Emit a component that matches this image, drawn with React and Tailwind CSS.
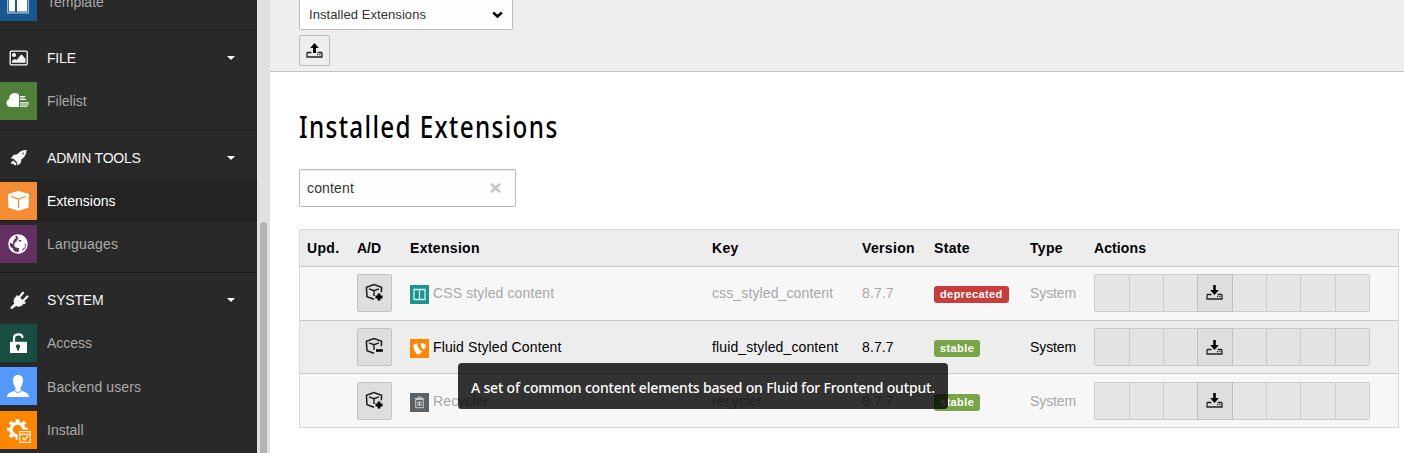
import React from "react";

const TemplateIcon = () => (
  <svg width="37" height="38" viewBox="0 0 37 38" className="block">
    <rect x="7.7" y="6.7" width="20.6" height="23.2" fill="none" stroke="#a9c1d8" strokeWidth="1.2" />
    <path d="M9 8h6v20.500H9zM17 8h10v20.500H17z" fill="#fff" />
  </svg>
);

const FilelistIcon = () => (
  <svg width="37" height="38" viewBox="0 0 37 38" className="block">
    <path d="M19 25h-8C5.500 25 5.200 18 9.300 17 8.800 13.500 11.500 11 14.800 11c2 0 3.400.7 4.200 2z" fill="#fff" />
    <path d="M20 14.600h5.300M20 17.400h6M20 20.900h9M20 24.200h7.500" stroke="#fff" strokeWidth="1.300" />
    <path d="M20 16h4M20 22.500h9" stroke="#a9c199" strokeWidth="1.500" />
  </svg>
);

const BoxIcon = () => (
  <svg width="37" height="38" viewBox="0 0 37 38" className="block">
    <path d="M18.500 9 29 12l-.5 13.700L18.500 28.800 8.500 25.700 8 12z" fill="#fff" />
    <path d="M11.200 14.500l7.300 2.500 7.300-2.500M18.500 17v9" fill="none" stroke="#f28d33" strokeWidth="1.300" />
  </svg>
);

const GlobeIcon = () => (
  <svg width="37" height="38" viewBox="0 0 37 38" className="block">
    <circle cx="18" cy="19" r="9" fill="none" stroke="#fff" strokeWidth="1.500" />
    <path d="M9.300 17c.5-3 2.300-5.500 5-7l1.700.3-1 1.700 1.500.6-2.400 2.200-1.200 2.400.3 2-1.600-.6zM17 10h5l4 4 1 5-1.500.5-1.300-1.500 1.300 3.500-2.700 2.500-1 3-2 1.700-1.200-1.200.4-4.500-3.500-.6-1.500-2.400 1.300-3 2.700-1 3 .7.5-1.700-2.500.3-1.700 1-.8-1.300 2.300-1-.8-1z" fill="#fff" />
    <path d="M10 21.500l2.700 1.800 1.300 3-1 .7-2.300-2.300z" fill="#fff" />
  </svg>
);

const UnlockIcon = () => (
  <svg width="37" height="38" viewBox="0 0 37 38" className="block">
    <path d="M10 17.800h17V29H10z" fill="#fff" />
    <path d="M14 18.500v-4.200c0-5 8.200-5.200 8.600-.4" fill="none" stroke="#fff" strokeWidth="2.200" />
    <path d="M18 20.200a2.200 2.200 0 0 1 1.100 4.100v2.200h-2.200v-2.200A2.200 2.200 0 0 1 18 20.200z" fill="#194e42" />
  </svg>
);

const UserIcon = () => (
  <svg width="37" height="38" viewBox="0 0 37 38" className="block">
    <path d="M18 8c3.300 0 5 2.100 5 5.200 0 3.500-1.600 6.300-2.500 7.300v2.300c.4.900 1.700 1.400 4 2.100 2.800.9 4.200 2 4.500 5.100H7c.3-3.100 1.700-4.200 4.500-5.100 2.300-.7 3.600-1.200 4-2.100v-2.300c-.9-1-2.500-3.800-2.500-7.300C13 10.100 14.700 8 18 8z" fill="#fff" />
    <path d="M14.300 23.400c1.500 2.600 6 2.600 7.400 0" fill="none" stroke="#5599ff" strokeWidth="1" />
  </svg>
);

const InstallIcon = () => (
  <svg width="37" height="38" viewBox="0 0 37 38" className="block">
    <circle cx="17.500" cy="18.500" r="6.300" fill="none" stroke="#fff" strokeWidth="3.200" />
    <g stroke="#fff" strokeWidth="3.600">
      <path d="M17.500 8v4M7 18.500h4M10 11l3 3M25 11l-3 3M10 26l3-3M17.500 29v-4M28 18.500h-4" />
    </g>
    <path d="M17.500 18.500H32V33H17.500z" fill="#ff8700" />
    <path d="M19.700 20.700h10.600v10.600H19.700zM19.700 23.500h10.600" fill="none" stroke="#ffe7c9" strokeWidth="1.300" />
    <path d="M22.500 26.800l2 2 3.500-3.500" fill="none" stroke="#fff" strokeWidth="1.500" />
  </svg>
);

const ImageIcon = () => (
  <svg width="20" height="18" viewBox="0 0 20 18">
    <rect x="1.200" y="2.200" width="17" height="13.600" rx="1" fill="none" stroke="#fff" strokeWidth="1.300" />
    <circle cx="5" cy="6" r="2" fill="#fff" />
    <path d="M3 13.800v-2l2.700-1.800 2 1L12 5.500l1.500.8L16.500 10v3.800z" fill="#f0f0f0" />
  </svg>
);

const RocketIcon = () => (
  <svg width="20" height="18" viewBox="0 0 20 18">
    <path d="M17.600 1C13.500 1 10.300 2.600 8.300 5.200L4.500 6 1.700 9.500l2.900.2 1 1L8 13.500l.6 2.900L11.700 14l.9-3.700c3.400-2.400 4.800-5.200 5-9.300z" fill="#f5f5f5" />
    <circle cx="14.300" cy="4.500" r="1" fill="#777" />
    <path d="M1.800 13.400l2.600-1.900 2.800 2.800.3 1.500-1.500.7-1.700-1.600-1.700.2z" fill="#f5f5f5" />
  </svg>
);

const PlugIcon = () => (
  <svg width="20" height="20" viewBox="0 0 20 20">
    <path d="M10.500 7 14 2.800M14 11l4.400-4.500" stroke="#f5f5f5" strokeWidth="2.300" strokeLinecap="round" />
    <path d="M7.800 4.700l9.200 8-1.300 1.300-1-.3c-2.300 3-5.200 3.600-7.600 2.300L3 19l-1.500-.2L1.800 17l3.400-3.500c-1.300-2.600-.5-5.100 2.300-7.500z" fill="#f5f5f5" />
  </svg>
);

const DriveIcon = ({ up }) => (
  <svg width="17" height="15" viewBox="0 0 17 15" className="block">
    {up ? <path d="M8.500 0 12.800 5H10V10H7V5H4.200z" fill="#000" /> : <path d="M7.200 0h2.600v5h3L8.500 10 4.200 5h3z" fill="#000" />}
    <path d="M5.500 9.500H1.500l-.5.5v4h15v-4l-.5-.5H11.500" fill="none" stroke="#222" strokeWidth="1.300" />
    <path d="M11 11.600h1.200M13.200 11.600h1.300" stroke="#222" strokeWidth="1.200" />
  </svg>
);

const PackageIcon = ({ plus }) => (
  <svg width="18" height="18" viewBox="0 0 18 18" className="block">
    <path d="M9 16.200 2 13.700 1.400 4.300 9 1.600l7.600 2.700-.3 5" fill="none" stroke="#1c1c1c" strokeWidth="1.500" />
    <path d="M4 5.800 9 7.700l5-1.900M9 7.700V13" fill="none" stroke="#1c1c1c" strokeWidth="1.400" />
    {plus ? <path d="M14 10.500v7M10.500 14h7" stroke="#000" strokeWidth="2.800" /> : <path d="M11 13.500H17.800" stroke="#000" strokeWidth="2.600" />}
  </svg>
);

const ColumnsIcon = () => (
  <svg width="19" height="19" viewBox="0 0 19 19" className="block shrink-0">
    <path d="M0 0h19v19H0z" fill="#1a9391" />
    <path d="M4 4.500h11v10H4zM9.500 4.500v10" fill="none" stroke="#d8eeee" strokeWidth="1.300" />
  </svg>
);

const Typo3Icon = () => (
  <svg width="19" height="19" viewBox="0 0 19 19" className="block shrink-0">
    <path d="M0 0h19v19H0z" fill="#ff8700" />
    <path d="M12.400 11.800c-.2.100-.5.100-.7.100-2 0-4.400-5.100-4.400-6.400 0-.5.100-.7.300-.9-2 .2-3.600.8-4 1.500-.2.300-.2.600-.2 1 0 2.900 2.700 8.500 4.900 8.500 1.400 0 3-1.700 4.100-3.800z" fill="#fff" />
    <path d="M11.600 4.300c2.300 0 4.100.4 4.100 1.800 0 2.600-1.200 4.400-2.200 4.400-1.200 0-2.800-3-2.800-5 0-.9.300-1.200.9-1.200z" fill="#fff" />
  </svg>
);

const TrashIcon = () => (
  <svg width="19" height="19" viewBox="0 0 19 19" className="block shrink-0">
    <path d="M0 0h19v19H0z" fill="#5b6164" />
    <path d="M5.700 6.500h7.600v8.200H5.700zM4.800 5.500h9.400M7.800 5.200V4h3.400v1.200M8 8.300v4.700M9.500 8.300v4.700M11 8.300v4.700" fill="none" stroke="#c9cccd" strokeWidth="1" />
  </svg>
);

function ModuleItem({ icon, label, tone, height = "h-[43px]", tracking = "tracking-[0.15px]", active = false }) {
  return (
    <div className={`flex items-center ${height} ${active ? "bg-[#232323] text-white" : "text-[#a9a9a9]"}`}>
      <div className={`h-[38px] w-[37px] shrink-0 ${tone}`}>{icon}</div>
      <span className={`pl-[10px] ${tracking}`}>{label}</span>
    </div>
  );
}

function ModuleGroup({ icon, label, height = "h-[48px]", children }) {
  return (
    <div className="border-t border-[#1e1e1e] pb-[7px]">
      <div className={`flex items-center text-[#f5f5f5] ${height}`}>
        <div className="flex w-[37px] shrink-0 justify-center pt-[6px]">{icon}</div>
        <span className="grow pl-[10px] pt-[6px] tracking-[-0.2px]">{label}</span>
        <svg width="8" height="4" viewBox="0 0 8 4" className="mr-[22px] mt-[6px]">
          <path d="M0 0h8L4 4z" fill="#fff" />
        </svg>
      </div>
      {children}
    </div>
  );
}

const columns = "grid grid-cols-[50px_53px_302px_150px_72px_96px_64px_1fr] items-center pl-[7px]";

const slots = ["w-[35px]", "w-[34px]", "w-[34px]", "w-[36px]", "w-[34px]", "w-[34px]", "w-[35px]", "w-[34px]"];

function Row({ icon, name, id, state, stateTone, installed, height, tone }) {
  const dim = installed ? "text-black" : "text-[#a8a8a8]";
  const line = installed ? "border-[#cbcbcb]" : "border-[#cdcdcd]";
  const fill = installed ? "bg-[#e3e3e3]" : "bg-[#e6e6e6]";
  return (
    <div className={`${columns} ${height} ${tone} ${dim} tracking-[0.12px]`}>
      <span />
      <div className="flex h-[38px] w-[35px] items-center justify-center rounded-[2px] border border-[#c3c3c3] bg-[#dedede] pb-[2px] pr-[1px]">
        <PackageIcon plus={!installed} />
      </div>
      <div className="flex items-center gap-[4px]">
        <div className="pt-[3px]">{icon}</div>
        <span>{name}</span>
      </div>
      <span>{id}</span>
      <span>8.7.7</span>
      <div className="flex pt-[3px]">
        <span className={`rounded-[3px] pl-[6px] pr-[6px] text-[11px] font-bold leading-[17px] tracking-[0.4px] text-white ${stateTone}`}>{state}</span>
      </div>
      <span className="tracking-[-0.1px]">System</span>
      <div className="flex">
        {slots.map((w, i) => (
          <div
            key={i}
            className={`flex h-[38px] items-center justify-center border-y ${w} ${i === 3 ? "border-x border-[#c1c1c1] bg-[#dedede] pr-[2px]" : `${line} ${fill}`} ${i < 3 ? "border-l" : ""} ${i > 3 ? "border-r" : ""} ${i === 0 ? "rounded-l-[2px]" : ""} ${i === 7 ? "rounded-r-[2px]" : ""}`}
          >
            {i === 3 && <DriveIcon />}
          </div>
        ))}
      </div>
    </div>
  );
}

export default function App() {
  return (
    <div className="relative flex h-[453px] w-[1404px] overflow-hidden bg-white font-['Liberation_Sans',sans-serif] text-[14px] leading-[20px]">
      <nav className="flex w-[257px] shrink-0 flex-col overflow-hidden bg-[#292929]">
        <div className="mt-[-20px] h-[50px] shrink-0">
          <ModuleItem icon={<TemplateIcon />} label="Template" tone="bg-[#1a568f]" tracking="tracking-[0] pt-[1px]" />
        </div>
        <ModuleGroup icon={<ImageIcon />} label="FILE">
          <ModuleItem icon={<FilelistIcon />} label="Filelist" tone="bg-[#4f7f38]" tracking="tracking-[0]" />
        </ModuleGroup>
        <ModuleGroup icon={<RocketIcon />} label="ADMIN TOOLS" height="h-[49px]">
          <ModuleItem icon={<BoxIcon />} label="Extensions" tone="bg-[#f28d33]" tracking="tracking-[0]" active />
          <ModuleItem icon={<GlobeIcon />} label="Languages" tone="bg-[#643061]" tracking="tracking-[0.2px]" />
        </ModuleGroup>
        <ModuleGroup icon={<PlugIcon />} label="SYSTEM">
          <ModuleItem icon={<UnlockIcon />} label="Access" tone="bg-[#194e42]" height="h-[43.5px]" tracking="tracking-[0]" />
          <ModuleItem icon={<UserIcon />} label="Backend users" tone="bg-[#5599ff]" tracking="tracking-[0.12px] pt-[1px]" />
          <ModuleItem icon={<InstallIcon />} label="Install" tone="bg-[#ff8700]" height="h-[44.5px]" tracking="tracking-[0]" />
        </ModuleGroup>
      </nav>
      <div className="w-[13px] shrink-0 bg-[#e0e0e0] pl-[3px] pt-[222px]">
        <div className="h-[240px] w-[7px] rounded-full bg-[#b3b4b6]" />
      </div>
      <main className="flex min-w-0 grow flex-col">
        <header className="h-[72px] shrink-0 border-b border-[#c3c3c3] bg-[#eeeeee] pl-[29px]">
          <div className="flex h-[30px] w-[214px] items-center justify-between rounded-b-[2px] border border-t-0 border-[#bbbbbb] bg-[#fefefe] pl-[9px] pr-[9px] text-[13px] tracking-[0.07px] text-[#333333]">
            <span>Installed Extensions</span>
            <svg width="11" height="8" viewBox="0 0 11 8">
              <path d="M1.200 1.500l4.300 4 4.300-4" fill="none" stroke="#000" strokeWidth="2.500" />
            </svg>
          </div>
          <div className="mt-[5px] flex h-[31px] w-[31px] items-center justify-center rounded-[2px] border border-[#bbbbbb] bg-[#eeeeee]">
            <DriveIcon up />
          </div>
        </header>
        <section className="pl-[29px] pt-[35px]">
          <h1 className="h-[40px] w-[258px] whitespace-nowrap font-['Noto_Sans',sans-serif] text-[30px] font-medium leading-[40px] tracking-[1.65px] text-black">
            <span className="inline-block origin-left scale-x-[0.81]">Installed Extensions</span>
          </h1>
          <div className="mt-[22px] flex h-[38px] w-[217px] items-center justify-between rounded-[2px] border border-[#bbbbbb] bg-[#fefefe] pl-[7px] pr-[14px] tracking-[0.15px] text-[#333333] shadow-[inset_0_1px_1px_rgba(0,0,0,0.075)]">
            <span>content</span>
            <svg width="11" height="10" viewBox="0 0 11 10">
              <path d="M1 .8l9 8.400M10 .8L1 9.200" stroke="#c6c6c6" strokeWidth="2.700" />
            </svg>
          </div>
          <div className="mt-[22px] w-[1100px] divide-y divide-[#c8c8c8] border border-[#d7d7d7]">
            <div className={`${columns} h-[37px] bg-[#ededed] font-bold tracking-[0.33px] text-black`}>
              <span>Upd.</span>
              <span className="tracking-[0]">A/D</span>
              <span>Extension</span>
              <span>Key</span>
              <span>Version</span>
              <span>State</span>
              <span>Type</span>
              <span className="tracking-[0.1px]">Actions</span>
            </div>
            <Row icon={<ColumnsIcon />} name="CSS styled content" id="css_styled_content" state="deprecated" stateTone="bg-[#c83c3c]" height="h-[54px] pb-[2px]" tone="bg-[#f7f7f7]" />
            <Row icon={<Typo3Icon />} name="Fluid Styled Content" id="fluid_styled_content" state="stable" stateTone="bg-[#79a548]" height="h-[53px]" tone="bg-[#ededed]" installed />
            <Row icon={<TrashIcon />} name="Recycler" id="recycler" state="stable" stateTone="bg-[#79a548]" height="h-[53px]" tone="bg-[#f7f7f7]" />
          </div>
        </section>
      </main>
      <div className="absolute left-[458px] top-[363px] flex h-[46px] w-[490px] items-center rounded-[4px] bg-black/80 pl-[13px] pt-[3px] font-['Noto_Sans',sans-serif] text-[14px] font-medium tracking-[-0.18px] text-white">
        <span className="whitespace-nowrap">A set of common content elements based on Fluid for Frontend output.</span>
      </div>
    </div>
  );
}
